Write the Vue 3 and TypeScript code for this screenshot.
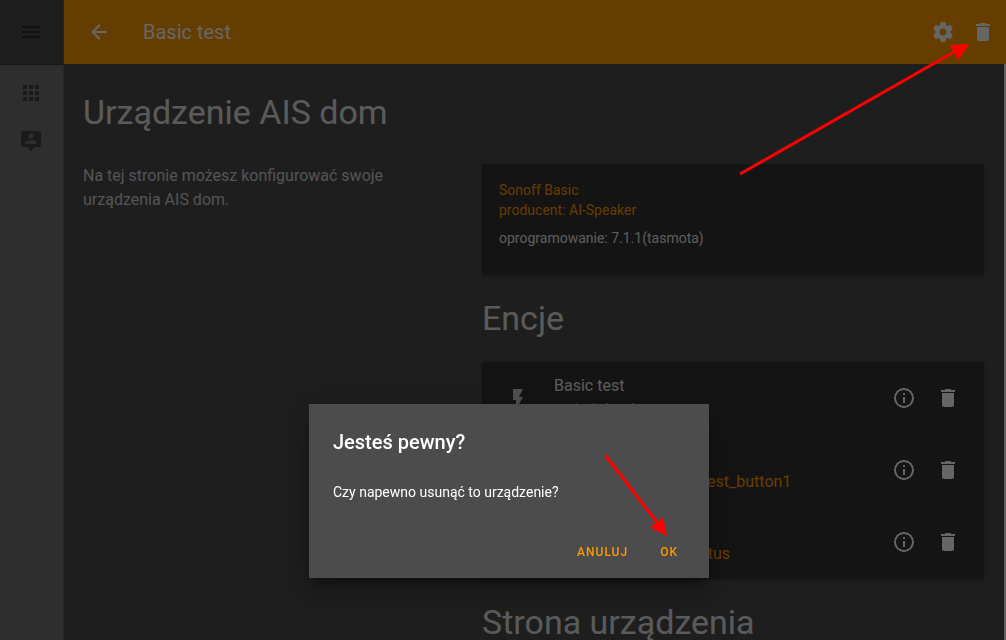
<script setup lang="ts">
import { ref } from 'vue'

interface Entity {
  name: string
  id: string
  icon: string
}

const paths = {
  menu: 'M3,6H21V8H3V6M3,11H21V13H3V11M3,16H21V18H3V16Z',
  back: 'M20,11V13H8L13.5,18.5L12.08,19.92L4.16,12L12.08,4.08L13.5,5.5L8,11H20Z',
  cog: 'M12,15.5A3.5,3.5 0 0,1 8.5,12A3.5,3.5 0 0,1 12,8.5A3.5,3.5 0 0,1 15.5,12A3.5,3.5 0 0,1 12,15.5M19.43,12.97C19.47,12.65 19.5,12.33 19.5,12C19.5,11.67 19.47,11.34 19.43,11L21.54,9.37C21.73,9.22 21.78,8.95 21.66,8.73L19.66,5.27C19.54,5.05 19.27,4.96 19.05,5.05L16.56,6.05C16.04,5.66 15.5,5.32 14.87,5.07L14.5,2.42C14.46,2.18 14.25,2 14,2H10C9.75,2 9.54,2.18 9.5,2.42L9.13,5.07C8.5,5.32 7.96,5.66 7.44,6.05L4.95,5.05C4.73,4.96 4.46,5.05 4.34,5.27L2.34,8.73C2.21,8.95 2.27,9.22 2.46,9.37L4.57,11C4.53,11.34 4.5,11.67 4.5,12C4.5,12.33 4.53,12.65 4.57,12.97L2.46,14.63C2.27,14.78 2.21,15.05 2.34,15.27L4.34,18.73C4.46,18.95 4.73,19.03 4.95,18.95L7.44,17.94C7.96,18.34 8.5,18.68 9.13,18.93L9.5,21.58C9.54,21.82 9.75,22 10,22H14C14.25,22 14.46,21.82 14.5,21.58L14.87,18.93C15.5,18.67 16.04,18.34 16.56,17.94L19.05,18.95C19.27,19.03 19.54,18.95 19.66,18.73L21.66,15.27C21.78,15.05 21.73,14.78 21.54,14.63L19.43,12.97Z',
  trash: 'M19,4H15.5L14.5,3H9.5L8.5,4H5V6H19M6,19A2,2 0 0,0 8,21H16A2,2 0 0,0 18,19V7H6V19Z',
  apps: 'M16,20H20V16H16M16,14H20V10H16M10,8H14V4H10M16,8H20V4H16M10,14H14V10H10M4,14H8V10H4M4,20H8V16H4M10,20H14V16H10M4,8H8V4H4V8Z',
  account: 'M4,2A2,2 0 0,0 2,4V16A2,2 0 0,0 4,18H8L12,22L16,18H20A2,2 0 0,0 22,16V4A2,2 0 0,0 20,2H4M12,4.3A2.7,2.7 0 0,1 12,9.7A2.7,2.7 0 0,1 12,4.3M18,15H6V14.1C6,12.1 10,11 12,11C14,11 18,12.1 18,14.1V15Z',
  flash: 'M7,3V14H10V23L17,11H13L17,3H7Z',
  eye: 'M12,9A3,3 0 0,0 9,12A3,3 0 0,0 12,15A3,3 0 0,0 15,12A3,3 0 0,0 12,9M12,4.5C7,4.5 2.73,7.61 1,12C2.73,16.39 7,19.5 12,19.5C17,19.5 21.27,16.39 23,12C21.27,7.61 17,4.5 12,4.5Z',
  info: 'M11,9H13V7H11M12,20C7.59,20 4,16.41 4,12C4,7.59 7.59,4 12,4C16.41,4 20,7.59 20,12C20,16.41 16.41,20 12,20M12,2A10,10 0 0,0 2,12A10,10 0 0,0 12,22A10,10 0 0,0 22,12A10,10 0 0,0 12,2M11,17H13V11H11V17Z',
}

const entities: Entity[] = [
  { name: 'Basic test', id: 'switch.basic_test', icon: paths.flash },
  { name: 'Basic test button1', id: 'binary_sensor.basic_test_button1', icon: paths.eye },
  { name: 'Basic test status', id: 'sensor.basic_test_status', icon: paths.eye },
]

const dialogOpen = ref(true)
</script>

<template>
  <div class="shell">
    <nav class="sidebar" aria-label="Menu">
      <div class="sidebar-top">
        <button class="icon-button" type="button" aria-label="Menu">
          <svg viewBox="0 0 24 24"><path :d="paths.menu" /></svg>
        </button>
      </div>
      <div class="sidebar-links">
        <a href="#apps" aria-label="Aplikacje"><svg viewBox="0 0 24 24"><path :d="paths.apps" /></svg></a>
        <a href="#account" aria-label="Konto"><svg viewBox="0 0 24 24"><path :d="paths.account" /></svg></a>
      </div>
    </nav>

    <div class="page">
      <header class="toolbar">
        <button class="icon-button" type="button" aria-label="Wstecz">
          <svg viewBox="0 0 24 24"><path :d="paths.back" /></svg>
        </button>
        <div class="toolbar-title">Basic test</div>
        <button class="icon-button" type="button" aria-label="Ustawienia">
          <svg viewBox="0 0 24 24"><path :d="paths.cog" /></svg>
        </button>
        <button class="icon-button" type="button" aria-label="Usuń" @click="dialogOpen = true">
          <svg viewBox="0 0 24 24"><path :d="paths.trash" /></svg>
        </button>
      </header>

      <main class="content">
        <h1>Urządzenie AIS dom</h1>
        <div class="columns">
          <p class="intro">Na tej stronie możesz konfigurować swoje urządzenia AIS dom.</p>
          <div class="details">
            <section class="card device">
              <div class="accent">Sonoff Basic</div>
              <div class="accent">producent: AI-Speaker</div>
              <div class="firmware">oprogramowanie: 7.1.1(tasmota)</div>
            </section>

            <h2>Encje</h2>
            <ul class="card entities">
              <li v-for="entity in entities" :key="entity.id">
                <svg class="entity-icon" viewBox="0 0 24 24"><path :d="entity.icon" /></svg>
                <div class="entity-text">
                  <div>{{ entity.name }}</div>
                  <div class="accent">{{ entity.id }}</div>
                </div>
                <button class="icon-button" type="button" aria-label="Informacje">
                  <svg viewBox="0 0 24 24"><path :d="paths.info" /></svg>
                </button>
                <button class="icon-button" type="button" aria-label="Usuń encję">
                  <svg viewBox="0 0 24 24"><path :d="paths.trash" /></svg>
                </button>
              </li>
            </ul>

            <h2>Strona urządzenia</h2>
          </div>
        </div>
      </main>
    </div>
  </div>

  <template v-if="dialogOpen">
    <div class="scrim"></div>
    <div class="dialog" role="dialog" aria-modal="true" aria-labelledby="dialog-title">
      <h3 id="dialog-title">Jesteś pewny?</h3>
      <p>Czy napewno usunąć to urządzenie?</p>
      <div class="actions">
        <button type="button" @click="dialogOpen = false">ANULUJ</button>
        <button type="button" @click="dialogOpen = false">OK</button>
      </div>
    </div>
  </template>

  <svg class="arrow arrow-delete" viewBox="0 0 232 134" aria-hidden="true">
    <line x1="2" y1="132" x2="216" y2="10" />
    <polygon points="231,2 212,3 220.500,18" />
  </svg>
  <svg class="arrow arrow-ok" viewBox="0 0 66 84" aria-hidden="true">
    <line x1="2.500" y1="2.500" x2="56" y2="72" />
    <polygon points="64,83 47,74.500 60,64.500" />
  </svg>
</template>

<style>
body {
  margin: 0;
  overflow: hidden;
  background: #4b4b4b;
}
</style>

<style scoped>
.shell {
  display: flex;
  height: 100vh;
  overflow: hidden;
  font-family: Roboto, "Noto Sans", sans-serif;
  font-size: 16px;
  line-height: 24px;
  color: #e6e6e6;
  background: #4b4b4b;
}

svg {
  display: block;
  width: 24px;
  height: 24px;
  flex: none;
  fill: currentColor;
}

.icon-button {
  display: flex;
  align-items: center;
  justify-content: center;
  flex: none;
  width: 40px;
  height: 40px;
  padding: 0;
  border: 0;
  background: none;
  color: #ffffff;
  cursor: pointer;
}

.sidebar {
  box-sizing: border-box;
  flex: none;
  width: 64px;
  border-right: 1px solid #5f5f5f;
  background: #737373;
}

.sidebar-top {
  display: flex;
  align-items: center;
  height: 64px;
  padding-left: 11px;
  border-bottom: 1px solid #3a3a3a;
  background: #4b4b4b;
}

.sidebar-top .icon-button {
  color: #2b2b2b;
}

.sidebar-links {
  display: flex;
  flex-direction: column;
  gap: 24px;
  padding: 16px 19px;
}

.sidebar-links a {
  color: #414141;
}

.page {
  display: flex;
  flex: 1;
  flex-direction: column;
  min-width: 0;
}

.toolbar {
  display: flex;
  align-items: center;
  flex: none;
  height: 64px;
  padding: 0 3px 0 15px;
  background: #ff9800;
}

.toolbar-title {
  flex: 1;
  padding-left: 24px;
  font-size: 20px;
  color: #ffffff;
}

.content {
  flex: 1;
  min-height: 0;
  overflow: hidden;
  padding: 28px 20px 0 19px;
  border-right: 2px solid #f0f0f0;
}

h1,
h2 {
  margin: 0;
  font-size: 34px;
  font-weight: 400;
  line-height: 40px;
  color: #e1e1e1;
}

.columns {
  display: grid;
  grid-template-columns: 399px minmax(0, 1fr);
  margin-top: 32px;
}

.intro {
  max-width: 320px;
  margin: 0;
  color: #d2d2d2;
}

.card {
  margin: 0;
  border-radius: 2px;
  background: #323232;
  box-shadow: 0 2px 2px rgba(0, 0, 0, 0.14), 0 1px 5px rgba(0, 0, 0, 0.12);
}

.accent {
  color: #ff9800;
}

.device {
  padding: 16px 17px 26px;
  font-size: 14px;
  line-height: 20px;
}

.firmware {
  margin-top: 8px;
}

h2 {
  margin: 24px 0;
}

.entities {
  padding: 0;
  list-style: none;
}

.entities li {
  display: flex;
  align-items: center;
  gap: 4px;
  height: 72px;
  padding: 0 16px 0 24px;
}

.entity-icon {
  color: #c8c8c8;
}

.entity-text {
  flex: 1;
  min-width: 0;
  padding-left: 20px;
}

.scrim {
  position: fixed;
  inset: 0;
  background: rgba(0, 0, 0, 0.6);
}

.dialog {
  position: fixed;
  top: 404px;
  left: 309px;
  box-sizing: border-box;
  width: 400px;
  padding: 22px 24px 8px;
  font-family: Roboto, "Noto Sans", sans-serif;
  color: #ffffff;
  background: #4c4c4c;
  box-shadow: 0 16px 24px 2px rgba(0, 0, 0, 0.14), 0 6px 30px 5px rgba(0, 0, 0, 0.12), 0 8px 10px -5px rgba(0, 0, 0, 0.4);
}

.dialog h3 {
  margin: 0;
  font-size: 20px;
  font-weight: 500;
  line-height: 32px;
}

.dialog p {
  margin: 24px 0 32px;
  font-size: 14px;
  line-height: 20px;
}

.actions {
  display: flex;
  justify-content: flex-end;
  gap: 16px;
  margin-right: -1px;
}

.actions button {
  height: 36px;
  padding: 0 8px;
  border: 0;
  background: none;
  font-family: inherit;
  font-size: 12px;
  font-weight: 500;
  letter-spacing: 1px;
  color: #ff9800;
  cursor: pointer;
}

.arrow {
  position: fixed;
  fill: #ff0000;
  stroke: none;
  pointer-events: none;
}

.arrow line {
  stroke: #ff0000;
  stroke-width: 3;
}

.arrow-delete {
  top: 42px;
  left: 738px;
  width: 232px;
  height: 134px;
}

.arrow-ok {
  top: 453px;
  left: 603px;
  width: 66px;
  height: 84px;
}
</style>
